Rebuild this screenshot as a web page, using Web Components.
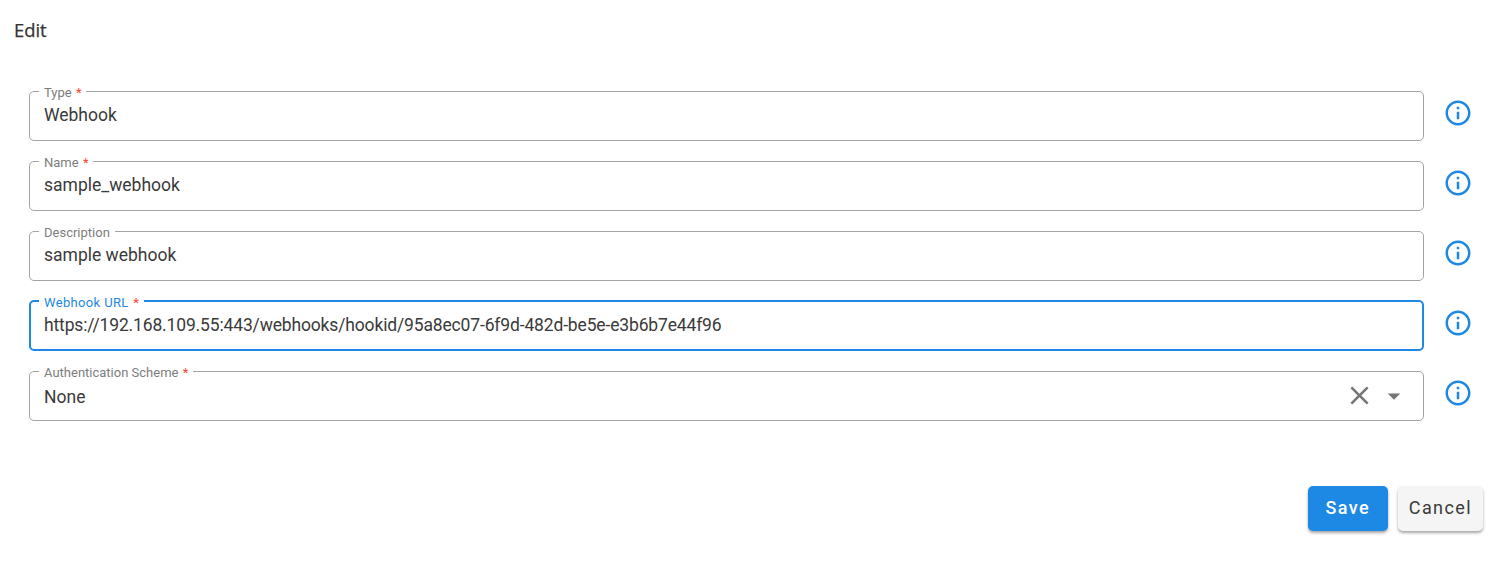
<!DOCTYPE html>
<html>
<head>
<meta charset="utf-8">
<title>Edit</title>
<style>
  html, body { margin: 0; background: #fff; }
  body { font-family: Roboto, "Liberation Sans", sans-serif; }
</style>
</head>
<body>
<edit-form>
  <span slot="title">Edit</span>
  <form-field label="Type" required value="Webhook"></form-field>
  <form-field label="Name" required value="sample_webhook"></form-field>
  <form-field label="Description" value="sample webhook"></form-field>
  <form-field label="Webhook URL" required focused value="https://192.168.109.55:443/webhooks/hookid/95a8ec07-6f9d-482d-be5e-e3b6b7e44f96"></form-field>
  <form-field label="Authentication Scheme" required select value="None"></form-field>
  <app-button slot="actions" primary>Save</app-button>
  <app-button slot="actions">Cancel</app-button>
</edit-form>

<script>
class EditForm extends HTMLElement {
    constructor() {
        super()
        this.attachShadow({ mode: 'open' });
    };

    connectedCallback() {
        this.shadowRoot.innerHTML = `
            <style>
                :host {
                    display: block;
                    height: 577px;
                    box-sizing: border-box;
                    padding: 19px 25px 0 14px;
                    color: #333;
                }
                h2 {
                    margin: 0;
                    font: 400 18.4px/22px "Open Sans", sans-serif;
                    -webkit-text-stroke: .25px #333;
                    color: #333;
                }
                .fields {
                    display: flex;
                    flex-direction: column;
                    gap: 13px;
                    margin: 43px 10px 0 15px;
                }
                .actions {
                    display: flex;
                    justify-content: flex-end;
                    gap: 10px;
                    margin-top: 65px;
                }
            </style>
            <h2><slot name="title"></slot></h2>
            <div class="fields"><slot></slot></div>
            <div class="actions"><slot name="actions"></slot></div>
        `;
    };
};

class FormField extends HTMLElement {
    constructor() {
        super()
        this.attachShadow({ mode: 'open' });
    };

    connectedCallback() {
        const selectIcons = `
            <svg class="clear" viewBox="0 0 24 24"><path d="M19 6.41 17.59 5 12 10.59 6.41 5 5 6.41 10.59 12 5 17.59 6.41 19 12 13.41 17.59 19 19 17.59 13.41 12z"/></svg>
            <svg class="arrow" viewBox="0 0 24 24"><path d="M7 10l5 5 5-5z"/></svg>
        `;
        this.shadowRoot.innerHTML = `
            <style>
                :host {
                    display: flex;
                    align-items: flex-start;
                    gap: 19px;
                }
                fieldset {
                    flex: 1;
                    min-width: 0;
                    height: 57px;
                    box-sizing: border-box;
                    margin: 0;
                    padding: 0 14px;
                    border: 1px solid #a3a3a3;
                    border-radius: 5px;
                    display: flex;
                    align-items: flex-start;
                }
                :host([focused]) fieldset {
                    border: 2px solid #1e88e5;
                    padding: 0 13px;
                }
                legend {
                    font-size: 13px;
                    line-height: 18px;
                    height: 14px;
                    padding: 0 5px;
                    margin-left: -5px;
                    color: #7d7d7d;
                    white-space: nowrap;
                }
                :host([focused]) legend { color: #1e88e5; letter-spacing: .35px; }
                legend i { font-style: normal; color: #f44336; margin-left: 1px; }
                .value {
                    flex: 1;
                    font-size: 17.5px;
                    line-height: 24px;
                    color: #3a3a3a;
                    margin-top: 5px;
                    white-space: nowrap;
                }
                :host([focused]) .value { letter-spacing: -.15px; }
                :host([select]) .value { margin-top: 7px; }
                svg { display: block; flex: none; }
                .clear { width: 31px; height: 31px; fill: #757575; margin: 2px 4px 0 0; }
                .arrow { width: 30px; height: 30px; fill: #757575; margin: 3px 0 0 0; }
                .info { width: 30px; height: 30px; fill: #1e88e5; margin-top: 13.5px; }
            </style>
            <fieldset>
                <legend>${this.getAttribute('label')}${this.hasAttribute('required') ? ' <i>*</i>' : ''}</legend>
                <div class="value">${this.getAttribute('value')}</div>
                ${this.hasAttribute('select') ? selectIcons : ''}
            </fieldset>
            <svg class="info" viewBox="0 0 24 24"><path d="M11 7h2v2h-2zm0 4h2v6h-2zm1-9C6.48 2 2 6.48 2 12s4.48 10 10 10 10-4.48 10-10S17.52 2 12 2zm0 18c-4.41 0-8-3.59-8-8s3.59-8 8-8 8 3.59 8 8-3.59 8-8 8z"/></svg>
        `;
    };
};

class AppButton extends HTMLElement {
    constructor() {
        super()
        this.attachShadow({ mode: 'open' });
    };

    connectedCallback() {
        this.shadowRoot.innerHTML = `
            <style>
                :host {
                    display: inline-flex;
                    align-items: center;
                    justify-content: center;
                    height: 45px;
                    padding: 0 11px 2px;
                    min-width: 80px;
                    box-sizing: border-box;
                    border-radius: 5px;
                    font-size: 18px;
                    letter-spacing: 1.4px;
                    background: #f5f5f5;
                    color: #3a3a3a;
                    box-shadow: 0 2px 3px rgba(0,0,0,.35);
                }
                :host([primary]) {
                    background: #1e88e5;
                    color: #fff;
                    font-weight: 500;
                }
            </style>
            <slot></slot>
        `;
    };
};

customElements.define("edit-form", EditForm);
customElements.define("form-field", FormField);
customElements.define("app-button", AppButton);
</script>
</body>
</html>
